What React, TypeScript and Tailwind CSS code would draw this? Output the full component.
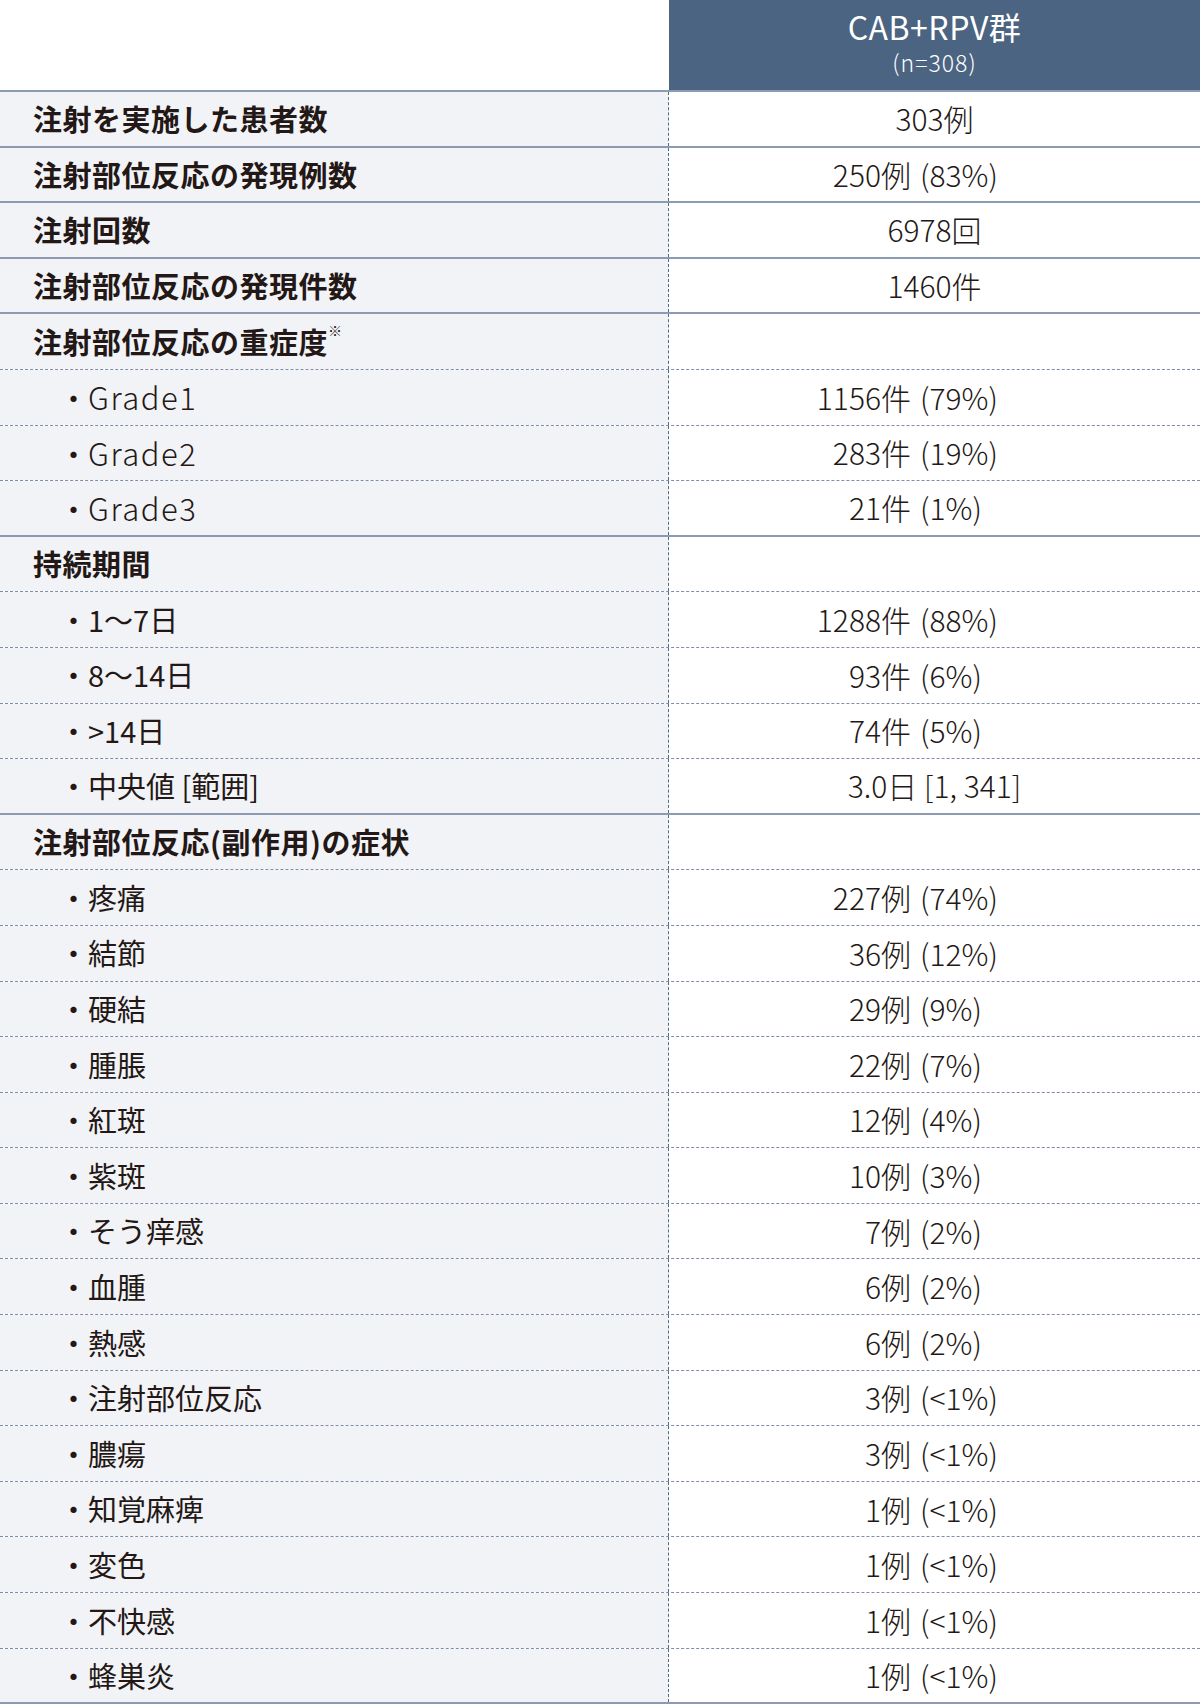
type Row = {
  label: string;
  value?: string;
  item?: boolean;
  latin?: boolean;
  note?: boolean;
};

const groups: Row[][] = [
  [{ label: "注射を実施した患者数", value: "303例" }],
  [{ label: "注射部位反応の発現例数", value: "250例 (83%)" }],
  [{ label: "注射回数", value: "6978回" }],
  [{ label: "注射部位反応の発現件数", value: "1460件" }],
  [
    { label: "注射部位反応の重症度", note: true },
    { label: "Grade1", value: "1156件 (79%)", item: true, latin: true },
    { label: "Grade2", value: "283件 (19%)", item: true, latin: true },
    { label: "Grade3", value: "21件 (1%)", item: true, latin: true },
  ],
  [
    { label: "持続期間" },
    { label: "1〜7日", value: "1288件 (88%)", item: true },
    { label: "8〜14日", value: "93件 (6%)", item: true },
    { label: ">14日", value: "74件 (5%)", item: true },
    { label: "中央値 [範囲]", value: "3.0日 [1, 341]", item: true },
  ],
  [
    { label: "注射部位反応(副作用)の症状" },
    { label: "疼痛", value: "227例 (74%)", item: true },
    { label: "結節", value: "36例 (12%)", item: true },
    { label: "硬結", value: "29例 (9%)", item: true },
    { label: "腫脹", value: "22例 (7%)", item: true },
    { label: "紅斑", value: "12例 (4%)", item: true },
    { label: "紫斑", value: "10例 (3%)", item: true },
    { label: "そう痒感", value: "7例 (2%)", item: true },
    { label: "血腫", value: "6例 (2%)", item: true },
    { label: "熱感", value: "6例 (2%)", item: true },
    { label: "注射部位反応", value: "3例 (<1%)", item: true },
    { label: "膿瘍", value: "3例 (<1%)", item: true },
    { label: "知覚麻痺", value: "1例 (<1%)", item: true },
    { label: "変色", value: "1例 (<1%)", item: true },
    { label: "不快感", value: "1例 (<1%)", item: true },
    { label: "蜂巣炎", value: "1例 (<1%)", item: true },
  ],
];

// 「250例 (83%)」は単位の後ろで揃える
function Value({ value }: { value?: string }) {
  if (!value) return null;
  const m = value.match(/^(\S+) (\(.+\))$/);
  if (!m) return <span>{value}</span>;
  return (
    <div className="flex w-full items-center">
      <span className="w-[242px] shrink-0 text-right">{m[1]}</span>
      <span className="pl-[9px]">{m[2]}</span>
    </div>
  );
}

function TableRow({ row, last }: { row: Row; last: boolean }) {
  return (
    <div
      className={
        "flex h-[55.6px] " +
        (last
          ? "border-b-2 border-solid border-[#8d9bb2]"
          : "border-b-[1.5px] border-dashed border-[#7f8ea8]")
      }
    >
      <div className="w-[669px] shrink-0 bg-[#f2f3f7] border-r border-dashed border-[#4f6a8c] flex items-center">
        {row.item ? (
          <span className="pl-[59px] text-[29px] text-[#231815]">
            ・
            {row.latin ? (
              <span className="text-[31px] font-light tracking-[1.5px]">
                {row.label}
              </span>
            ) : (
              row.label
            )}
          </span>
        ) : (
          <span className="pl-[33px] text-[29px] font-bold text-[#231815] tracking-[0.5px]">
            {row.label}
            {row.note && (
              <sup className="text-[14px] font-normal align-super">※</sup>
            )}
          </span>
        )}
      </div>
      <div className="flex-1 flex items-center justify-center text-[30px] font-light text-[#231815]">
        <Value value={row.value} />
      </div>
    </div>
  );
}

export default function App() {
  return (
    <div
      className="w-[1200px] bg-white"
      style={{ fontFamily: '"Noto Sans CJK JP", "Noto Sans", sans-serif' }}
    >
      {/* ヘッダー */}
      <div className="flex h-[92px] border-b-2 border-[#8d9bb2]">
        <div className="w-[669px] shrink-0" />
        <div className="flex-1 bg-[#4b6481] flex flex-col items-center pt-[10px] text-white leading-none">
          <span className="text-[32px] tracking-[0.5px]">CAB+RPV群</span>
          <span className="text-[23px] font-light tracking-[1px] mt-[9px]">
            (n=308)
          </span>
        </div>
      </div>

      {groups.map((group, gi) =>
        group.map((row, ri) => (
          <TableRow
            key={`${gi}-${ri}`}
            row={row}
            last={ri === group.length - 1}
          />
        ))
      )}
    </div>
  );
}
